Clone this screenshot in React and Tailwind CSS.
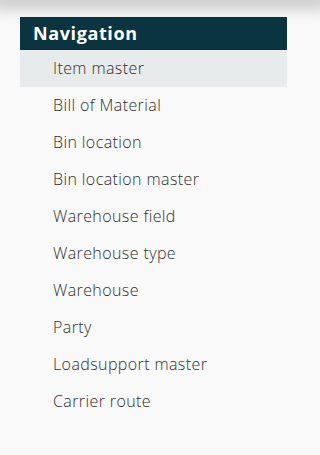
import React from "react";

const links = [
  "Item master",
  "Bill of Material",
  "Bin location",
  "Bin location master",
  "Warehouse field",
  "Warehouse type",
  "Warehouse",
  "Party",
  "Loadsupport master",
  "Carrier route",
];

const App = () => {
  return (
    <div
      className="min-h-[455px] bg-[#f9f9f9] relative overflow-hidden"
      style={{ fontFamily: '"Open Sans", "Noto Sans", sans-serif' }}
    >
      <div className="h-0 w-full shadow-[0_0_16px_9px_rgba(0,0,0,0.2)]"></div>
      <div className="w-[295px] pt-[17px] pl-5 pr-2">
        <h2 className="bg-[#0b3441] text-white font-bold text-[18px] leading-[33px] h-[33px] pl-[13px] tracking-[0.6px]">
          Navigation
        </h2>
        <ul>
          {links.map((link, i) => (
            <li
              key={link}
              className={`h-[37px] leading-[37px] pl-[33px] text-[16px] font-light tracking-[0.4px] text-[#2e2e2e] ${
                i === 0 ? "bg-[#e8ebec]" : ""
              }`}
            >
              {link}
            </li>
          ))}
        </ul>
      </div>
    </div>
  );
};

export default App;
